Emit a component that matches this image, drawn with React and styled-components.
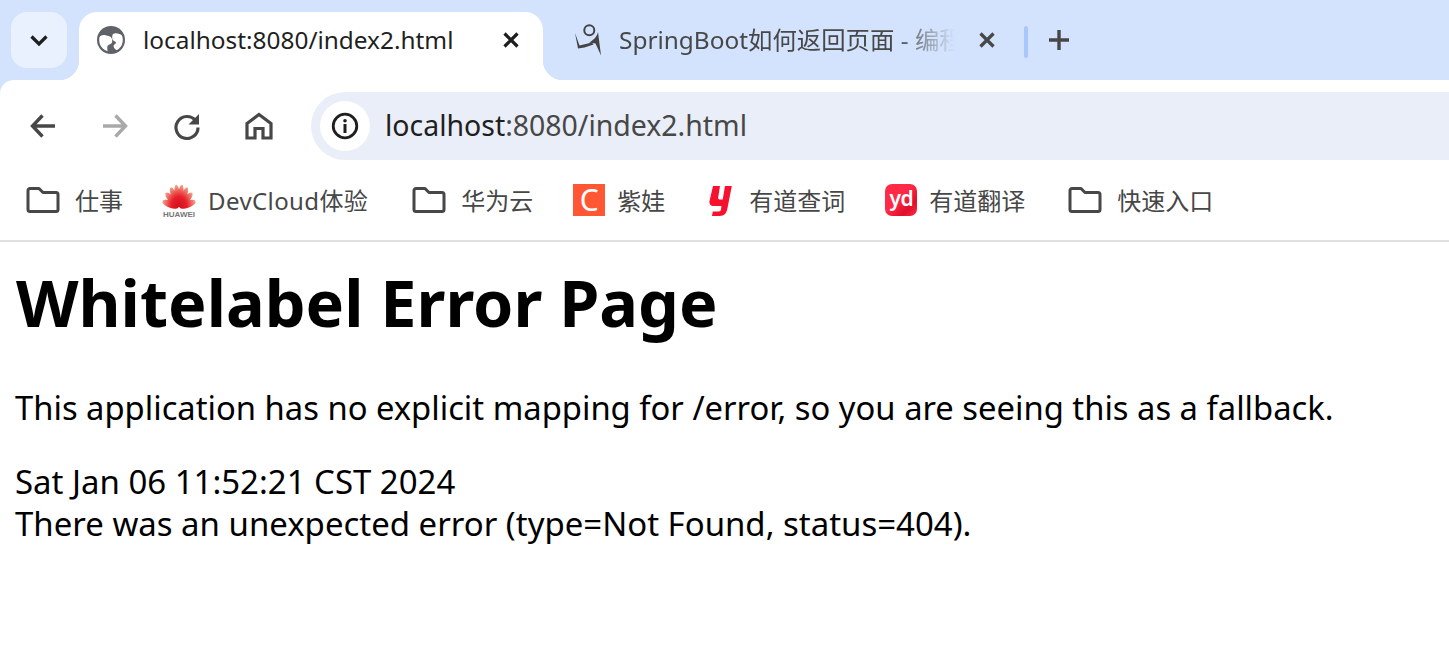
import React from 'react';
import styled, { createGlobalStyle } from 'styled-components';

const UI_FONT = '"Noto Sans", "Noto Sans CJK SC", sans-serif';

const GlobalStyle = createGlobalStyle`
    html, body {
        margin: 0;
        padding: 0;
        background: #fff;
        overflow: hidden;
    }
    body {
        font-family: ${UI_FONT};
    }
`;

const Window = styled.div`
    width: 1449px;
    height: 651px;
    background: #d3e3fd;
    overflow: hidden;
`;

const TabStrip = styled.div`
    height: 68px;
    padding: 12px 0 0 11px;
    display: flex;
    align-items: flex-start;
`;

const TabMenu = styled.div`
    width: 56px;
    height: 56px;
    border-radius: 16px;
    background: #e9f1fe;
    display: flex;
    align-items: center;
    justify-content: center;
    margin-right: 12px;
`;

const ActiveTab = styled.div`
    position: relative;
    width: 464px;
    height: 68px;
    box-sizing: border-box;
    padding: 0 20px 12px 17px;
    background: #fff;
    border-radius: 18px 18px 0 0;
    display: flex;
    align-items: center;
    z-index: 1;

    &::before,
    &::after {
        content: "";
        position: absolute;
        bottom: 0;
        width: 20px;
        height: 20px;
    }
    &::before {
        left: -20px;
        background: radial-gradient(circle at 0 0, transparent 20px, #fff 20.5px);
    }
    &::after {
        right: -20px;
        background: radial-gradient(circle at 100% 0, transparent 20px, #fff 20.5px);
    }
`;

const InactiveTab = styled.div`
    width: 465px;
    height: 56px;
    margin-left: 16px;
    box-sizing: border-box;
    padding: 0 25px 0 14px;
    display: flex;
    align-items: center;
    color: #474747;
`;

const Favicon = styled.span`
    flex: none;
    width: 30px;
    height: 30px;
    display: flex;
    align-items: center;
    justify-content: center;
    margin-right: ${p => p.$gap}px;
`;

const TabTitle = styled.span`
    flex: 1;
    min-width: 0;
    overflow: hidden;
    white-space: nowrap;
    font-size: 24.4px;
    line-height: 56px;
    color: ${p => p.$color};
    ${p => p.$fade && `
        mask-image: linear-gradient(to right, #000 82%, transparent 100%);
        -webkit-mask-image: linear-gradient(to right, #000 82%, transparent 100%);
    `}
`;

const TabClose = styled.span`
    flex: none;
    width: 24px;
    height: 24px;
    margin-left: ${p => p.$gap}px;
    display: flex;
    align-items: center;
    justify-content: center;
`;

const Separator = styled.span`
    flex: none;
    width: 4px;
    height: 32px;
    margin: 14px 0 0 0;
    border-radius: 2px;
    background: #a8c7fa;
`;

const NewTab = styled.span`
    flex: none;
    width: 24px;
    height: 56px;
    margin-left: 19px;
    display: flex;
    align-items: center;
    justify-content: center;
`;

const Toolbar = styled.div`
    height: 80px;
    box-sizing: border-box;
    padding: 12px 0 0 0;
    background: #fff;
    border-top-left-radius: 14px;
    display: flex;
    align-items: flex-start;
`;

const NavGroup = styled.div`
    width: 311px;
    height: 68px;
    flex: none;
    padding-left: 29px;
    box-sizing: border-box;
    display: flex;
    align-items: center;
    gap: 44px;
`;

const NavIcon = styled.span`
    flex: none;
    width: 28px;
    height: 28px;
    display: flex;
`;

const Omnibox = styled.div`
    flex: 1;
    height: 68px;
    box-sizing: border-box;
    padding-left: 9px;
    background: #eaeef8;
    border-radius: 34px 0 0 34px;
    display: flex;
    align-items: center;
`;

const InfoChip = styled.span`
    flex: none;
    width: 50px;
    height: 50px;
    border-radius: 50%;
    background: #fff;
    display: flex;
    align-items: center;
    justify-content: center;
    margin-right: 15px;
`;

const Url = styled.span`
    font-size: 28.45px;
    line-height: 38px;
    margin-bottom: 2px;
    color: #474747;
    white-space: nowrap;
`;

const Host = styled.span`
    color: #1f1f1f;
`;

const Bookmarks = styled.div`
    height: 80px;
    box-sizing: border-box;
    padding: 0 0 0 26px;
    background: #fff;
    display: flex;
    align-items: center;
`;

const Bookmark = styled.div`
    display: flex;
    align-items: center;
    gap: ${p => p.$gap || 12}px;
    margin-right: ${p => p.$after}px;
    color: #474747;
    font-size: 24px;
    line-height: 32px;
    white-space: nowrap;
`;

const BookmarkLabel = styled.span`
    margin-top: 2px;
    letter-spacing: ${p => p.$tracking || 0}px;
`;

const BookmarkIcon = styled.span`
    flex: none;
    width: ${p => p.$w || 32}px;
    height: 32px;
    display: flex;
`;

const CIcon = styled.span`
    flex: none;
    width: 32px;
    height: 32px;
    background: #ff5733;
    color: #fff;
    font-size: 30px;
    line-height: 31px;
    text-align: center;
`;

const YdIcon = styled.span`
    flex: none;
    width: 32px;
    height: 32px;
    border-radius: 7px;
    background: linear-gradient(135deg, #ff2a45 45%, #e00f2c 75%, #ff2a45 100%);
    color: #fff;
    font-size: 21px;
    font-weight: 600;
    line-height: 28px;
    text-align: center;
    letter-spacing: -0.5px;
`;

const Divider = styled.div`
    height: 2px;
    background: #e0e0e0;
`;

const Page = styled.main`
    height: 409px;
    padding: 16px 0 0 16px;
    background: #fff;
    color: #000;
`;

const Heading = styled.h1`
    margin: 0 0 41px;
    font-size: 64.7px;
    line-height: 88px;
    font-weight: 700;
`;

const Para = styled.p`
    margin: 0 0 32px -1px;
    font-size: ${p => p.$size}px;
    line-height: 42px;
`;

const FolderSvg = () => (
    <svg width="34" height="32" viewBox="0 0 34 32" fill="none">
        <path d="M2 6.500a2 2 0 0 1 2-2h9l4 4h13a2 2 0 0 1 2 2v15a2 2 0 0 1-2 2H4a2 2 0 0 1-2-2z" stroke="#474747" strokeWidth="3" strokeLinejoin="round" />
    </svg>
);

const GlobeSvg = () => (
    <svg width="28" height="28" viewBox="0 0 28 28">
        <defs>
            <clipPath id="globeClip"><circle cx="14" cy="14" r="11.800" /></clipPath>
        </defs>
        <circle cx="14" cy="14" r="14" fill="#5f6368" />
        <g clipPath="url(#globeClip)" fill="#fff">
            <path d="M0 14C2 10 5 8.500 7.500 9c2 .5 4 1 5.500 1.500 2 1 2.500 4 2 6-.5 1.500-3.500 2-4.500 3.500-.5 1.500 0 5 .5 8C5 27 0 22 0 14z" />
            <path d="M16 8c3-1.500 8-.5 12 4v8l-7 5c-2-1-4.500-3-4.500-5 0-1.500 2.500-2 2.500-3.500 0-1-3-1.500-3.500-3-.5-1.500-.5-4 .5-5.500z" />
        </g>
    </svg>
);

const SpringSvg = () => (
    <svg width="30" height="34" viewBox="7 7 30 34" fill="#444">
        <circle cx="23.300" cy="14.300" r="5" fill="none" stroke="#444" strokeWidth="2" />
        <path d="M9 17l4.500 12.500L26 26.500l1.500 2-9 3-6.500 1z" />
        <path d="M32 16c-1 5-5 8.500-9 10.500l6.500 1L35 39.500z" />
    </svg>
);

const HuaweiSvg = () => (
    <svg width="34" height="34" viewBox="0 0 34 34">
        <defs>
            <linearGradient id="petal" x1="0" y1="0" x2="0" y2="1">
                <stop offset="0" stopColor="#f3a58d" />
                <stop offset="0.55" stopColor="#e8202a" />
                <stop offset="1" stopColor="#d3101c" />
            </linearGradient>
        </defs>
        <g transform="translate(17 0) scale(.76 1) translate(-17 0)">
            {[-76, -52, -30, -10, 10, 30, 52, 76].map(a => (
                <ellipse key={a} cx="17" cy="11.500" rx="3.700" ry="11" fill="url(#petal)" transform={`rotate(${a} 17 23)`} />
            ))}
        </g>
        <text x="17" y="33" textAnchor="middle" fontSize="6.500" fontWeight="700" fill="#777" fontFamily="Liberation Sans, sans-serif" textLength="32" lengthAdjust="spacingAndGlyphs">HUAWEI</text>
    </svg>
);

const YoudaoSvg = () => (
    <svg width="32" height="32" viewBox="5 8 32 32">
        <path d="M13 10h7l-1.800 11.500c-.2 1.300.3 2 1.500 2h3L25 10h6.800L27.500 32c-.8 5-3 8-8 8h-7.500l.8-4.500h6c1.200 0 2-.8 2.200-2l.5-3.500h-7.500c-3.500 0-5-2-4.500-5z" fill="#f6122f" />
    </svg>
);

const Stroke = ({ size, children, color = '#474747', width = 3 }) => (
    <svg width={size} height={size} viewBox={`0 0 ${size} ${size}`} fill="none" stroke={color} strokeWidth={width}>
        {children}
    </svg>
);

const CloseSvg = ({ color }) => (
    <Stroke size={20} color={color} width={3.2}>
        <path d="M3.500 3.500l13 13M16.500 3.500l-13 13" />
    </Stroke>
);

function App() {
    return (
        <Window>
            <GlobalStyle />
            <TabStrip>
                <TabMenu>
                    <Stroke size={20} color="#1f1f1f" width={3.2}>
                        <path d="M2.500 6.500l7.500 7.500 7.500-7.500" />
                    </Stroke>
                </TabMenu>
                <ActiveTab>
                    <Favicon $gap={17}><GlobeSvg /></Favicon>
                    <TabTitle $color="#1f1f1f">localhost:8080/index2.html</TabTitle>
                    <TabClose $gap={8}><CloseSvg color="#1f1f1f" /></TabClose>
                </ActiveTab>
                <InactiveTab>
                    <Favicon $gap={16}><SpringSvg /></Favicon>
                    <TabTitle $color="#474747" $fade>SpringBoot如何返回页面 - 编程网</TabTitle>
                    <TabClose $gap={20}><CloseSvg color="#474747" /></TabClose>
                </InactiveTab>
                <Separator />
                <NewTab>
                    <Stroke size={24} width={3.400}>
                        <path d="M12 2v20M2 12h20" />
                    </Stroke>
                </NewTab>
            </TabStrip>
            <Toolbar>
                <NavGroup>
                    <NavIcon>
                        <Stroke size={28} width={3.400}>
                            <path d="M26 14H4M13.500 3.500L3.500 14l10 10.500" />
                        </Stroke>
                    </NavIcon>
                    <NavIcon>
                        <Stroke size={28} color="#a9a9a9" width={3.400}>
                            <path d="M2 14h22M14.500 3.500L24.500 14l-10 10.500" />
                        </Stroke>
                    </NavIcon>
                    <NavIcon>
                        <svg width="28" height="28" viewBox="0 0 28 28" fill="none">
                            <path d="M22.500 8.500A11 11 0 1 0 25 15.500" stroke="#474747" strokeWidth="3.200" />
                            <path d="M26 2v10.500H15.500z" fill="#474747" />
                        </svg>
                    </NavIcon>
                    <NavIcon>
                        <Stroke size={28} width={3.200}>
                            <path d="M14 2.500L26 11.500V26H18V16.500H10V26H2V11.500z" />
                        </Stroke>
                    </NavIcon>
                </NavGroup>
                <Omnibox>
                    <InfoChip>
                        <svg width="28" height="28" viewBox="0 0 28 28" fill="none">
                            <circle cx="14" cy="14" r="11.800" stroke="#1f1f1f" strokeWidth="2.800" />
                            <circle cx="14" cy="8.800" r="1.800" fill="#1f1f1f" />
                            <rect x="12.500" y="12" width="3" height="9" fill="#1f1f1f" />
                        </svg>
                    </InfoChip>
                    <Url><Host>localhost</Host>:8080/index2.html</Url>
                </Omnibox>
            </Toolbar>
            <Bookmarks>
                <Bookmark $after={39} $gap={15}>
                    <BookmarkIcon $w={34}><FolderSvg /></BookmarkIcon>
                    <BookmarkLabel>仕事</BookmarkLabel>
                </Bookmark>
                <Bookmark $after={44}>
                    <BookmarkIcon $w={34}><HuaweiSvg /></BookmarkIcon>
                    <BookmarkLabel $tracking={0.4}>DevCloud体验</BookmarkLabel>
                </Bookmark>
                <Bookmark $after={40} $gap={15}>
                    <BookmarkIcon $w={34}><FolderSvg /></BookmarkIcon>
                    <BookmarkLabel>华为云</BookmarkLabel>
                </Bookmark>
                <Bookmark $after={40}>
                    <CIcon>C</CIcon>
                    <BookmarkLabel>紫娃</BookmarkLabel>
                </Bookmark>
                <Bookmark $after={40}>
                    <BookmarkIcon><YoudaoSvg /></BookmarkIcon>
                    <BookmarkLabel>有道查词</BookmarkLabel>
                </Bookmark>
                <Bookmark $after={43}>
                    <YdIcon>yd</YdIcon>
                    <BookmarkLabel>有道翻译</BookmarkLabel>
                </Bookmark>
                <Bookmark $after={0} $gap={15}>
                    <BookmarkIcon $w={34}><FolderSvg /></BookmarkIcon>
                    <BookmarkLabel>快速入口</BookmarkLabel>
                </Bookmark>
            </Bookmarks>
            <Divider />
            <Page>
                <Heading>Whitelabel Error Page</Heading>
                <Para $size={32.75}>This application has no explicit mapping for /error, so you are seeing this as a fallback.</Para>
                <Para $size={32.96}>
                    Sat Jan 06 11:52:21 CST 2024<br />
                    There was an unexpected error (type=Not Found, status=404).
                </Para>
            </Page>
        </Window>
    );
}

export default App;
